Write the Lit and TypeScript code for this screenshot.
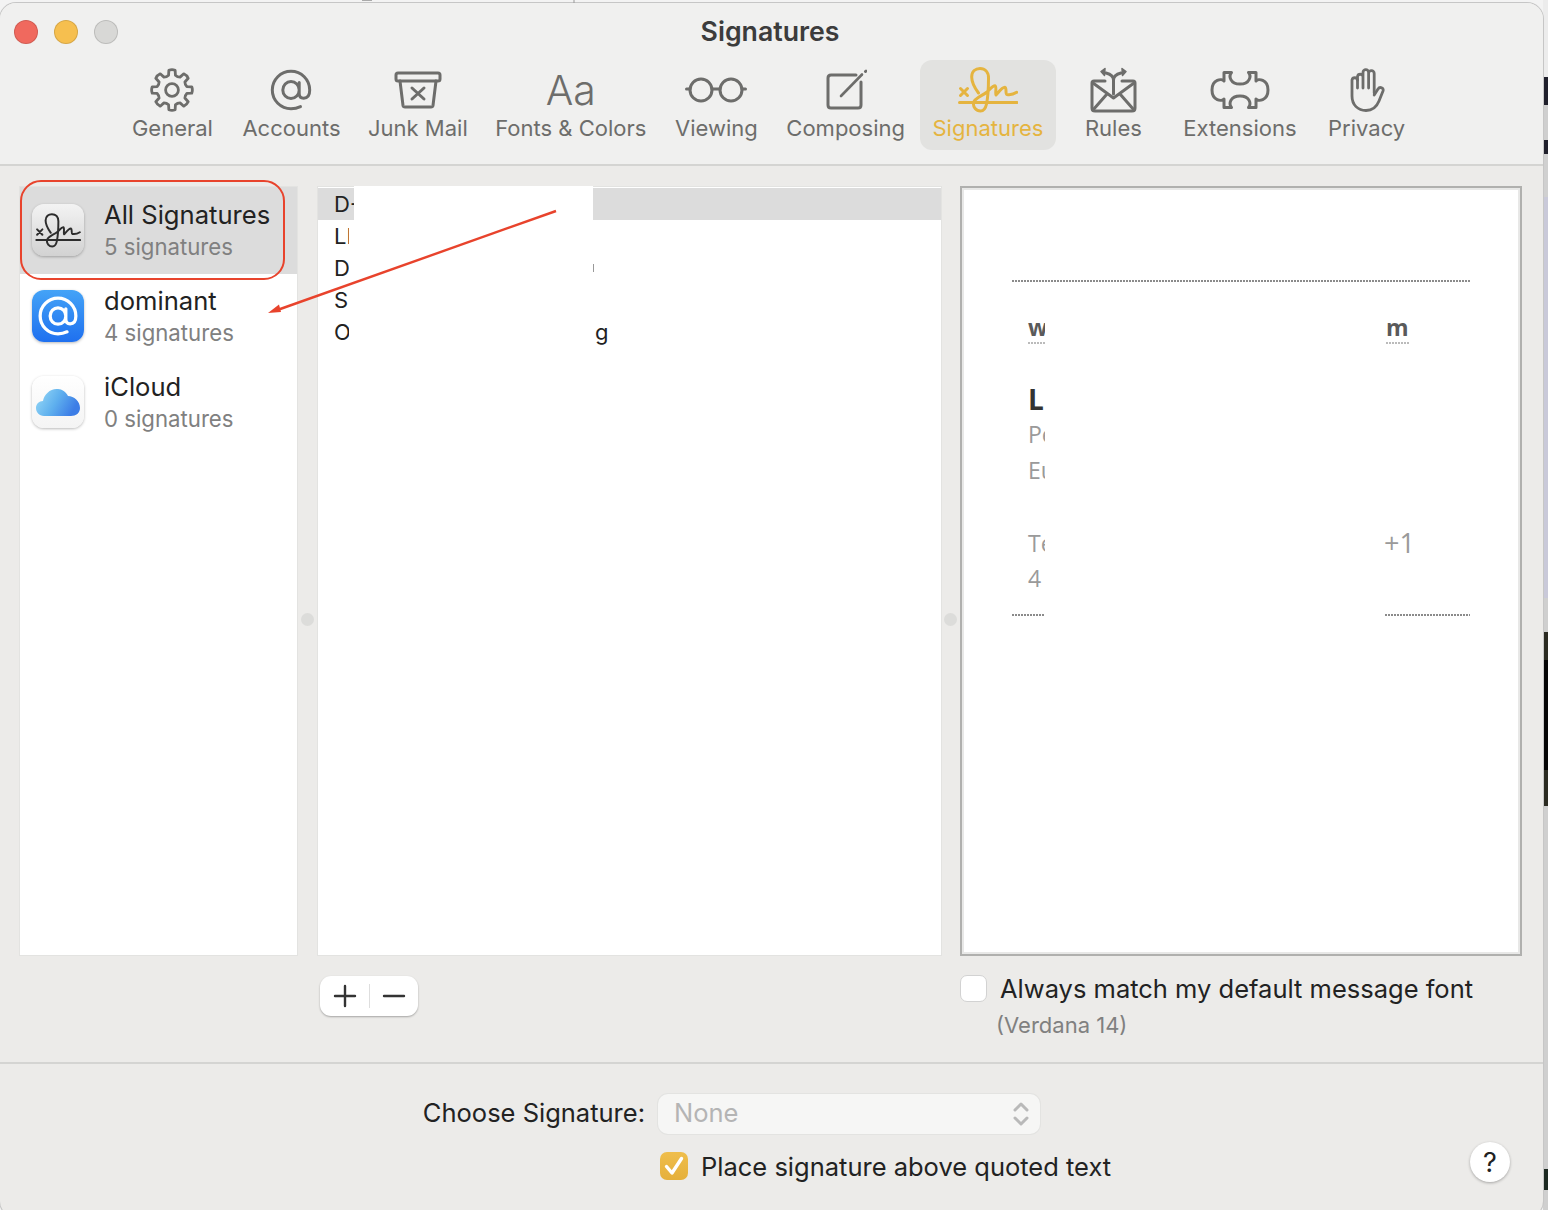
import { LitElement, html, css } from "lit";
import { customElement } from "lit/decorators.js";

function gearPath(): string {
  const c = 22, R = 20, r = 15.2, parts: string[] = [];
  const p = (rad: number, deg: number) => {
    const a = (deg * Math.PI) / 180;
    return `${(c + rad * Math.cos(a)).toFixed(2)} ${(c + rad * Math.sin(a)).toFixed(2)}`;
  };
  for (let i = 0; i < 8; i++) {
    const a = i * 45 - 90;
    parts.push(`${i === 0 ? "M" : "Q " + p(r - 1.2, a - 22.5)} ${p(r, a - 13)}`);
    parts.push(`L ${p(R, a - 9)} Q ${p(R + 1, a)} ${p(R, a + 9)} L ${p(r, a + 13)}`);
  }
  parts.push(`Q ${p(r - 1.2, -112.5)} ${p(r, -103)} Z`);
  return parts.join(" ");
}

const SIG = "M20.5 26C16 20 13.7 15 13.7 10C13.7 4.5 17.5 1.5 22 1.5C27 1.5 30.5 5 30.5 11C30.5 20 30 30 28.5 37C27.5 42 25.5 44 22.5 44C18 44 15 40 15.5 36C16 31 24 29 29 25C32 22.5 34.5 18.5 37 18.7C39 19 37 27 38 28C40 26 44 20 47 20.3C49 21 47 27 49 27.5C52 28 56 27 58.7 25.3";
const AT = "M31.5 38.6C28.5 40 25.5 40.7 22 40.7A18.7 18.7 0 1 1 40.7 22C40.7 27 38.6 30.2 34.7 30.2C31.8 30.2 30.2 28.3 30.2 25.5V14.5M30.2 22A8.2 8.6 0 1 1 13.8 22A8.2 8.6 0 1 1 30.2 22";

const signature = (w: number, h: number, stroke: number) => html`<svg width=${w} height=${h} viewBox="0 0 60 46" fill="none" stroke="currentColor" stroke-width=${stroke} stroke-linecap="round" stroke-linejoin="round">
  <path d=${SIG}/><path d="M2.5 21.5L9.5 28.5M9.5 21.5L2.5 28.5"/><path d="M1.5 35.5H59"/>
</svg>`;

const icons: Record<string, unknown> = {
  General: html`<svg width="44" height="44" viewBox="0 0 44 44" fill="none" stroke="currentColor" stroke-width="2.8" stroke-linejoin="round"><path d=${gearPath()}/><circle cx="22" cy="22" r="6.4"/></svg>`,
  Accounts: html`<svg width="44" height="44" viewBox="0 0 44 44" fill="none" stroke="currentColor" stroke-width="3" stroke-linecap="round"><path d=${AT}/></svg>`,
  "Junk Mail": html`<svg width="48" height="38" viewBox="0 0 48 38" fill="none" stroke="currentColor" stroke-width="3" stroke-linejoin="round" stroke-linecap="round"><rect x="2" y="2" width="44" height="8" rx="2"/><path d="M6 10L9 34.5Q9.3 36 11 36H37Q38.7 36 39 34.5L42 10"/><path d="M18 17L30 28M30 17L18 28"/></svg>`,
  Viewing: html`<svg width="62" height="26" viewBox="0 0 62 26" fill="none" stroke="currentColor" stroke-width="3" stroke-linecap="round"><circle cx="16" cy="13" r="11"/><circle cx="46" cy="13" r="11"/><path d="M27 12H35M5 12H1.5M57 12H60.5"/></svg>`,
  Composing: html`<svg width="42" height="42" viewBox="0 0 42 42" fill="none" stroke="currentColor" stroke-width="3" stroke-linecap="round" stroke-linejoin="round"><path d="M31 6H6Q3 6 3 9V36Q3 39 6 39H33Q36 39 36 36V13"/><path d="M16 27L37 5.5" stroke-width="2.6"/><path d="M40.5 2.5L41 2" stroke-width="3"/></svg>`,
  Signatures: signature(60, 46, 3),
  Rules: html`<svg width="48" height="46" viewBox="0 0 48 46" fill="none" stroke="currentColor" stroke-width="3" stroke-linecap="round" stroke-linejoin="round"><path d="M16 14H5Q3 14 3 16V41Q3 44 6 44H43Q46 44 46 41V16Q46 14 44 14H33"/><path d="M4 16L24.5 31L45 16M4 43L18 27M45 43L31 27"/><path d="M24.5 27V13C24.5 9 21 7 17 6M24.5 13C24.5 9 28 7 32 6"/><path d="M12 4.5L16 1.5L15.5 8.5ZM37 4.5L33 1.5L33.5 8.5Z" fill="currentColor" stroke-width="1.5"/></svg>`,
  Extensions: html`<svg width="60" height="40" viewBox="0 0 60 40" fill="none" stroke="currentColor" stroke-width="3" stroke-linejoin="round"><path d="M14 2.5H21.5C18.5 6 20 14 30 14C40 14 41.5 6 38.5 2.5H46V11C48 8.5 58 9 58 20C58 31 48 31.5 46 29V37.5H38.5C41.5 34 40 26 30 26C20 26 18.5 34 21.5 37.5H14V29C12 31.5 2 31 2 20C2 9 12 8.5 14 11Z"/></svg>`,
  Privacy: html`<svg width="36" height="44" viewBox="0 0 36 44" fill="none" stroke="currentColor" stroke-width="2.8" stroke-linecap="round" stroke-linejoin="round"><path d="M8.5 20V8.5A2.8 2.8 0 0 1 14 8.5V20M14 8.5V4.5A2.8 2.8 0 0 1 19.6 4.5V20M19.6 5.5A2.8 2.8 0 0 1 25.2 5.5V25"/><path d="M8.5 12A2.8 2.8 0 0 0 3 12V28C3 37 9 42.5 17 42.5C25 42.5 28 38 30 33L34 23C35 20 31 18 29 21L25.2 27"/></svg>`,
};

const tabs = ["General", "Accounts", "Junk Mail", "Fonts & Colors", "Viewing", "Composing", "Signatures", "Rules", "Extensions", "Privacy"];

@customElement("app-root")
export class AppRoot extends LitElement {
  static styles = css`
    :host { display: block; width: 1548px; height: 1210px; overflow: hidden; position: relative; background: #f3f3f3; font-family: Inter, "Liberation Sans", sans-serif; color: #222; }
    .strip { position: absolute; right: 0; top: 0; bottom: 0; width: 5px; background: linear-gradient(#ececec 0 77px, #20202c 77px 105px, #cfcfcf 105px 140px, #20202c 140px 154px, #d0d0d0 154px 197px, #c9c9d9 197px 598px, #cfcfcf 598px 632px, #2b2b22 632px 660px, #050505 660px 770px, #2b2b22 770px 806px, #cfcfcf 806px 1169px, #1d2a22 1169px 1190px, #cfcfcf 1190px); }
    .window { position: relative; width: 1543px; height: 1214px; margin-top: 3px; box-sizing: border-box; background: #ecebe9; border-radius: 16px; box-shadow: 0 0 0 1px #c6c6c6; overflow: hidden; }
    .top { height: 161px; background: #f0f0ef; border-bottom: 2px solid #d4d4d2; box-sizing: content-box; }
    .title { display: grid; grid-template-columns: 1fr auto 1fr; align-items: center; height: 56px; font-size: 26.7px; font-weight: 600; color: #3c3c3c; padding-right: 3px; }
    .lights { display: flex; gap: 16px; padding-left: 14px; padding-top: 2px; }
    .light { width: 22px; height: 22px; border-radius: 50%; border: 1px solid rgba(0,0,0,.13); }
    .red { background: #f0695e; } .yellow { background: #f6bf4f; } .grey { background: #d8d8d6; }
    .tabs { display: flex; justify-content: center; gap: 2.5px; padding-right: 4px; padding-top: 1px; }
    .tab { display: flex; flex-direction: column; align-items: center; min-width: 110px; height: 90px; padding: 0 12.5px; box-sizing: border-box; border-radius: 12px; color: #6d6d6b; font-size: 22px; white-space: nowrap; }
    .tab.active { background: #e2e2e0; color: #e5b43f; }
    .ic { height: 52px; display: flex; align-items: center; justify-content: center; margin-top: 4px; }
    .tl { line-height: 28px; margin-top: -2px; }
    .aa { font-size: 41px; font-weight: 300; line-height: 52px; color: #6d6d6b; }
    .cols { display: grid; grid-template-columns: 277px 21px 623px 19px 562px; padding: 20px 0 0 20px; height: 790px; box-sizing: border-box; }
    .panel { background: #fff; box-shadow: 0 0 0 1px #e3e3e1; height: 768px; margin-top: 1px; position: relative; }
    .handle { display: flex; justify-content: center; padding-top: 427px; align-items: flex-start; }
    .dot { width: 13px; height: 13px; border-radius: 50%; background: #dcdcda; }
    .acct { display: flex; gap: 20px; height: 86px; padding: 0 0 0 12px; align-items: flex-start; }
    .acct.sel { background: #dcdcdc; height: 87px; }
    .app { width: 52px; height: 52px; margin-top: 17px; border-radius: 12px; display: flex; align-items: center; justify-content: center; flex: none; box-shadow: 0 1px 3px rgba(0,0,0,.28); }
    .acct:not(.sel) .app { margin-top: 16px; }
    .app.sig { background: linear-gradient(#f3f3f3, #d2d2d2); color: #2d2d2d; }
    .app.at { background: linear-gradient(#44a3f7, #1f70ef); color: #fff; }
    .app.cloud { background: linear-gradient(#fff, #f4f4f4); }
    .names { padding-top: 11px; white-space: nowrap; }
    .acct.sel .names { padding-top: 12px; }
    .n1 { font-size: 25.6px; line-height: 32px; color: #222; }
    .n2 { font-size: 22.2px; line-height: 32px; color: #808080; }
    .siglist { padding-top: 1px; }
    .sr { display: grid; grid-template-columns: 259px 1fr; height: 32px; padding-left: 16px; line-height: 32px; font-size: 22px; color: #222; align-items: center; }
    .sr.sel { background: #dcdcdc; }
    .mask { position: absolute; background: #fff; }
    .m1 { left: 36px; top: -1px; width: 239px; height: 159px; }
    .m2 { left: 31px; top: 33px; width: 6px; height: 125px; }
    .tick { width: 1px; height: 8px; background: #999; }
    .g { padding-left: 2px; }
    .preview { height: 770px; box-sizing: border-box; border: 2px solid #b0b0ae; background: #fff; box-shadow: inset 0 0 0 2px #e8e8e7; padding: 92px 50px 0; font-family: "Open Sans", sans-serif; font-size: 23px; color: #9a9a9a; }
    .dots { height: 2px; background: repeating-linear-gradient(90deg, #8b8b8b 0 2px, transparent 2px 3px); }
    .dots.gap { background: repeating-linear-gradient(90deg, #8b8b8b 0 2px, transparent 2px 3px) 0 0 / 33px 2px no-repeat, repeating-linear-gradient(90deg, #8b8b8b 0 2px, transparent 2px 3px) 373px 0 / 85px 2px no-repeat; margin-top: 18px; }
    .pr { display: grid; grid-template-columns: 33px 340px 85px; height: 36px; align-items: center; }
    .pr.first { margin-top: 28px; margin-bottom: 34px; }
    .pr.spaced { margin-bottom: 36px; }
    .clip { padding-left: 16px; overflow: hidden; white-space: nowrap; }
    .link { font-weight: 700; color: #5a5a5a; font-size: 23px; }
    .u { display: inline-block; height: 36px; line-height: 34px; background: repeating-linear-gradient(90deg, #bbb 0 2px, transparent 2px 3px) 0 32px / 100% 2px no-repeat; }
    .um { margin-left: 1px; }
    .big { font-weight: 700; color: #333; font-size: 28px; position: relative; top: 1px; }
    .plus { font-size: 27px; margin-left: -1px; }
    .lower { display: grid; grid-template-columns: 277px 21px 623px 19px 562px; padding: 0 0 0 20px; height: 108px; box-sizing: border-box; border-bottom: 2px solid #d4d4d2; }
    .pm { grid-column: 3; margin: 20px 0 0 2px; width: 98px; height: 40px; display: flex; align-items: center; justify-content: center; gap: 12px; background: #fff; border-radius: 11px; box-shadow: 0 1px 2px rgba(0,0,0,.3); color: #333; }
    .sep { width: 1px; height: 24px; background: #dedede; }
    .fontopt { grid-column: 5; }
    .fo1 { display: flex; align-items: center; gap: 13px; margin-top: 15px; height: 34px; font-size: 25.5px; white-space: nowrap; color: #222; }
    .cb { width: 27px; height: 27px; box-sizing: border-box; border-radius: 7px; background: #fff; border: 1px solid #d2d2d2; flex: none; }
    .fo2 { font-size: 22px; color: #808080; margin: 4px 0 0 36px; line-height: 32px; }
    .foot { display: grid; grid-template-columns: 645px 382px 1fr; grid-template-rows: 40px 40px; row-gap: 8px; padding-top: 30px; align-items: center; font-size: 25.5px; color: #222; white-space: nowrap; }
    .lab { text-align: right; padding-bottom: 4px; }
    .sel-box { margin-left: 13px; width: 382px; height: 40px; box-sizing: border-box; background: #f6f6f5; border-radius: 10px; box-shadow: 0 0 0 1px #e3e3e1; display: flex; align-items: center; justify-content: space-between; padding: 0 11px 0 16px; color: #b4b4b4; }
    .none { padding-bottom: 4px; }
    .place { grid-column: 2; margin-left: 15px; display: flex; align-items: center; gap: 13px; position: relative; top: 4px; }
    .on { width: 28px; height: 28px; border-radius: 7px; background: linear-gradient(#efbe4c, #e5b03b); display: flex; align-items: center; justify-content: center; flex: none; }
    .help { justify-self: end; margin-right: 33px; width: 40px; height: 40px; border-radius: 50%; background: #fff; box-shadow: 0 1px 3px rgba(0,0,0,.3); display: flex; align-items: center; justify-content: center; font-size: 27px; color: #222; }
    .notes { position: absolute; left: 0; top: 0; pointer-events: none; }
  `;

  render() {
    return html`
      <div class="strip"></div>
      <div class="window">
        <div class="top">
          <div class="title">
            <div class="lights"><span class="light red"></span><span class="light yellow"></span><span class="light grey"></span></div>
            <div>Signatures</div><div></div>
          </div>
          <div class="tabs">
            ${tabs.map((t) => html`<div class="tab ${t === "Signatures" ? "active" : ""}">
              <div class="ic">${t === "Fonts & Colors" ? html`<span class="aa">Aa</span>` : icons[t]}</div>
              <div class="tl">${t}</div>
            </div>`)}
          </div>
        </div>

        <div class="cols">
          <div class="panel">
            <div class="acct sel">
              <div class="app sig">${signature(46, 35, 2.6)}</div>
              <div class="names"><div class="n1">All Signatures</div><div class="n2">5 signatures</div></div>
            </div>
            <div class="acct">
              <div class="app at"><svg width="42" height="42" viewBox="0 0 44 44" fill="none" stroke="currentColor" stroke-width="3.4" stroke-linecap="round"><path d=${AT}/></svg></div>
              <div class="names"><div class="n1">dominant</div><div class="n2">4 signatures</div></div>
            </div>
            <div class="acct">
              <div class="app cloud"><svg width="52" height="52" viewBox="0 0 52 52"><defs><linearGradient id="cl" x1="0" y1="0" x2="1" y2="0.35"><stop offset="0" stop-color="#9bdcf7"/><stop offset="0.55" stop-color="#5fb0ee"/><stop offset="1" stop-color="#3c7de6"/></linearGradient></defs><path fill="url(#cl)" d="M12 40C7 40 4 36 4 32C4 28 7 25 11 25C12 18 19 12 26 13C30 13 34 16 36 20C42 20 48 25 48 32C48 37 44 40 39 40Z"/></svg></div>
              <div class="names"><div class="n1">iCloud</div><div class="n2">0 signatures</div></div>
            </div>
          </div>
          <div class="handle"><span class="dot"></span></div>
          <div class="panel">
            <div class="siglist">
              <div class="sr sel"><span>D-</span></div>
              <div class="sr"><span>LE</span></div>
              <div class="sr"><span>D</span><span class="tick"></span></div>
              <div class="sr"><span>S</span></div>
              <div class="sr"><span>O</span><span class="g">g</span></div>
            </div>
            <div class="mask m1"></div>
            <div class="mask m2"></div>
          </div>
          <div class="handle"><span class="dot"></span></div>
          <div class="preview">
            <div class="dots"></div>
            <div class="pr first link"><div class="clip"><span class="u">www</span></div><div></div><div class="um"><span class="u">m</span></div></div>
            <div class="pr big"><div class="clip">L</div></div>
            <div class="pr"><div class="clip">Pe</div></div>
            <div class="pr spaced"><div class="clip">Eu</div></div>
            <div class="pr"><div class="clip">Te</div><div></div><div class="plus">+1</div></div>
            <div class="pr"><div class="clip">4</div></div>
            <div class="dots gap"></div>
          </div>
        </div>

        <div class="lower">
          <div class="pm">
            <svg width="24" height="24" viewBox="0 0 24 24" stroke="currentColor" stroke-width="2.4" stroke-linecap="round"><path d="M12 2V22M2 12H22"/></svg>
            <span class="sep"></span>
            <svg width="24" height="24" viewBox="0 0 24 24" stroke="currentColor" stroke-width="2.4" stroke-linecap="round"><path d="M2 12H22"/></svg>
          </div>
          <div class="fontopt">
            <div class="fo1"><span class="cb"></span><span>Always match my default message font</span></div>
            <div class="fo2">(Verdana 14)</div>
          </div>
        </div>

        <div class="foot">
          <div class="lab">Choose Signature:</div>
          <div class="sel-box"><span class="none">None</span>
            <svg width="16" height="26" viewBox="0 0 16 26" fill="none" stroke="#b9b9b9" stroke-width="3" stroke-linecap="round" stroke-linejoin="round"><path d="M2 9L8 3L14 9M2 17L8 23L14 17"/></svg>
          </div>
          <div></div>
          <div></div>
          <div class="place">
            <span class="on"><svg width="22" height="22" viewBox="0 0 22 22" fill="none" stroke="#fff" stroke-width="3.4" stroke-linecap="round" stroke-linejoin="round"><path d="M3.5 11.5L9 18L18.5 3.5"/></svg></span>
            <span>Place signature above quoted text</span>
          </div>
          <div class="help">?</div>
        </div>
      </div>

      <svg class="notes" width="1548" height="1210" viewBox="0 0 1548 1210" fill="none">
        <path d="M574 0V3" stroke="#999"/>
        <path d="M362 0.5H372" stroke="#aaa"/>
        <rect x="21" y="181" width="263" height="98" rx="20" stroke="#e8432c" stroke-width="2"/>
        <path d="M556 211L276 310.5" stroke="#e8432c" stroke-width="2.4"/>
        <path d="M268 313L279 304.5L281 312Z" fill="#e8432c"/>
      </svg>
    `;
  }
}
